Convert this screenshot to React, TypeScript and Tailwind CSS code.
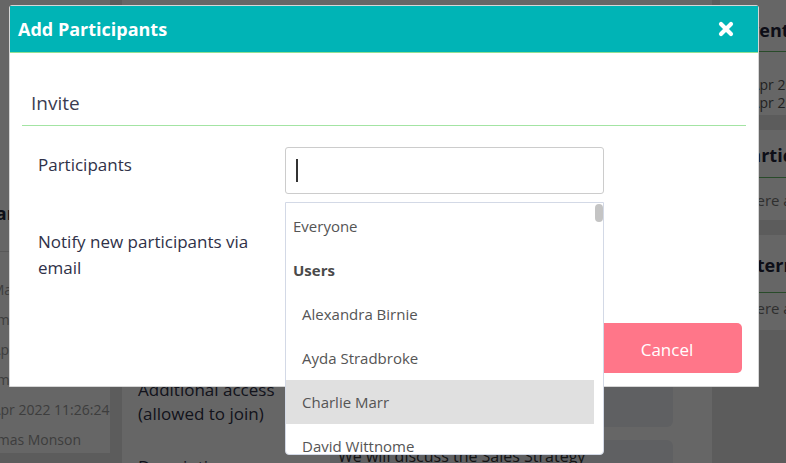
const activity = [
  '21 Mar 2022 09:14:02',
  'Thomas Monson',
  '21 Apr 2022 10:02:11',
  'Thomas Monson',
  '21 Apr 2022 11:26:24',
  'Thomas Monson',
]

const users = ['Alexandra Birnie', 'Ayda Stradbroke', 'Charlie Marr', 'David Wittnome', 'Emma Rowe']

function DetailRow({ label, value, box, labelPad }: { label: string; value?: string; box: string; labelPad: string }) {
  return (
    <div className="flex">
      <div className={`w-[192px] shrink-0 pr-4 text-[17px] leading-[24px] text-[#2f3148] ${labelPad}`}>{label}</div>
      <div className={`flex-1 rounded-[6px] bg-[#eef0f5] px-2 text-[16px] leading-[24px] text-[#333] ${box}`}>{value}</div>
    </div>
  )
}

function CloseIcon() {
  return (
    <svg viewBox="0 0 16 16" className="h-[16px] w-[16px]" fill="none" stroke="white" strokeWidth="4.2" strokeLinecap="round">
      <path d="M3 3 L13 13 M13 3 L3 13" />
    </svg>
  )
}

// page behind the modal (gets dimmed by the overlay)
function Page() {
  return (
    <div className="flex h-full bg-[#e6e6e6]">
      <div className="ml-[-67px] flex h-[453px] w-[177px] shrink-0 flex-col bg-white pt-[200px]">
        <div className="-ml-[7px] whitespace-nowrap border-b border-[#dddddd] pb-[25px] text-[18px] font-bold leading-[26px] text-[#22243a]">
          Participants
        </div>
        <div className="pt-[23px]">
          {activity.map((a, i) => (
            <div key={i} className="whitespace-nowrap pl-[39px] text-[14px] leading-[30px] text-[#9a9a9a]">
              {a}
            </div>
          ))}
        </div>
      </div>

      <div className="ml-3 flex w-[590px] shrink-0 flex-col gap-[13px] bg-white pl-4 pr-[39px] pt-4">
        <DetailRow label="Title" value="Sales Strategy Meeting" box="h-[44px] pt-[10px]" labelPad="pt-[10px]" />
        <DetailRow label="Date" value="21 Apr 2022" box="h-[44px] pt-[10px]" labelPad="pt-[10px]" />
        <DetailRow label="Location" value="Board Room" box="h-[44px] pt-[10px]" labelPad="pt-[10px]" />
        <DetailRow label="Organiser" value="Thomas Monson" box="h-[44px] pt-[10px]" labelPad="pt-[10px]" />
        <DetailRow label="Participants" value="Thomas Monson" box="h-[97px] pt-[10px]" labelPad="pt-[10px]" />
        <DetailRow label="Additional access (allowed to join)" box="h-[73px]" labelPad="pt-[24px]" />
        <DetailRow label="Description" value="We will discuss the Sales Strategy" box="h-[100px] pt-[4px]" labelPad="pt-[15px]" />
      </div>

      <div className="ml-2 flex w-[300px] shrink-0 flex-col">
        <div className="h-[115px] bg-white pl-[19px]">
          <div className="border-b border-[#66bb6a] pb-[9px] pt-[18px] text-[18px] font-bold leading-[24px] text-[#22243a]">Event</div>
          <div className="mt-[24px] text-[14px] leading-[18px] text-[#555]">
            <div className="-ml-[8px]">21 Apr 2022 10:00</div>
            <div className="-ml-[8px]">21 Apr 2022 11:30</div>
          </div>
        </div>
        <div className="mt-[15px] h-[90px] bg-white pl-[19px]">
          <div className="border-b border-[#66bb6a] pb-[10px] pt-[13px] text-[18px] font-bold leading-[24px] text-[#22243a]">Participants</div>
          <div className="mt-[12px] text-[15px] leading-[20px] text-[#777]">There are no participants</div>
        </div>
        <div className="mt-[15px] h-[95px] bg-white pl-[19px]">
          <div className="border-b border-[#66bb6a] pb-[15px] pt-[18px] text-[18px] font-bold leading-[24px] text-[#22243a]">Internal</div>
          <div className="mt-[5px] text-[15px] leading-[20px] text-[#777]">There are no notes</div>
        </div>
      </div>
    </div>
  )
}

function ParticipantPicker() {
  return (
    <div className="relative w-[319px]">
      <div className="flex h-[47px] items-center rounded-[3px] border border-[#cccccc] bg-white">
        <span className="ml-[10px] h-[23px] w-[2px] bg-[#333]" />
      </div>
      <div className="absolute left-0 top-[55px] z-10 flex h-[253px] w-[319px] overflow-hidden rounded-b-[4px] border border-[#d3d9e6] bg-white">
        <ul className="flex-1 pt-[1px] text-[15px] text-[#555]">
          <li className="flex h-[44px] items-center pl-[7px]">Everyone</li>
          <li className="flex h-[44px] items-center pl-[7px] font-bold text-[#4a4a4a]">Users</li>
          {users.map((u) => (
            <li
              key={u}
              className={`flex h-[44px] items-center pl-[16px] ${u === 'Charlie Marr' ? 'bg-[#e0e0e0]' : ''}`}
            >
              {u}
            </li>
          ))}
        </ul>
        <div className="w-[9px] shrink-0">
          <div className="ml-px mt-px h-[18px] w-[8px] rounded-[4px] bg-[#c4c4c4]" />
        </div>
      </div>
    </div>
  )
}

export default function App() {
  return (
    <div className="relative h-[463px] w-full overflow-hidden font-['Open_Sans',sans-serif]">
      <Page />
      <div className="absolute inset-0 bg-black/60" />

      <div className="absolute left-[9px] top-[5px] w-[750px] rounded-t-[3px] border border-[#d6d6d6] bg-white">
        <div className="flex h-[47px] items-center justify-between border-b border-[#93e093] bg-[#00b4b6] pl-[8px] pr-[24px]">
          <h2 className="text-[18px] font-bold text-white">Add Participants</h2>
          <CloseIcon />
        </div>

        <div className="px-[12px] pb-[13px]">
          <div className="border-b border-[#a3e4a3] pb-[10px] pl-[9px] pt-[38px] text-[19px] leading-[24px] text-[#3b3c50]">
            Invite
          </div>

          <div className="mt-[21px] flex">
            <div className="w-[263px] shrink-0 pl-[16px] pt-[5px] text-[17px] leading-[26px] text-[#2f3148]">Participants</div>
            <ParticipantPicker />
          </div>

          <div className="mt-[35px] flex">
            <div className="w-[263px] shrink-0 pl-[16px] pr-[26px] text-[17px] leading-[26px] text-[#2f3148]">
              Notify new participants via email
            </div>
          </div>

          <div className="mt-[42px] flex justify-end pr-[4px]">
            <button className="h-[50px] w-[150px] rounded-[5px] bg-[#ff7689] pt-[3px] text-[17px] text-white">Cancel</button>
          </div>
        </div>
      </div>
    </div>
  )
}
